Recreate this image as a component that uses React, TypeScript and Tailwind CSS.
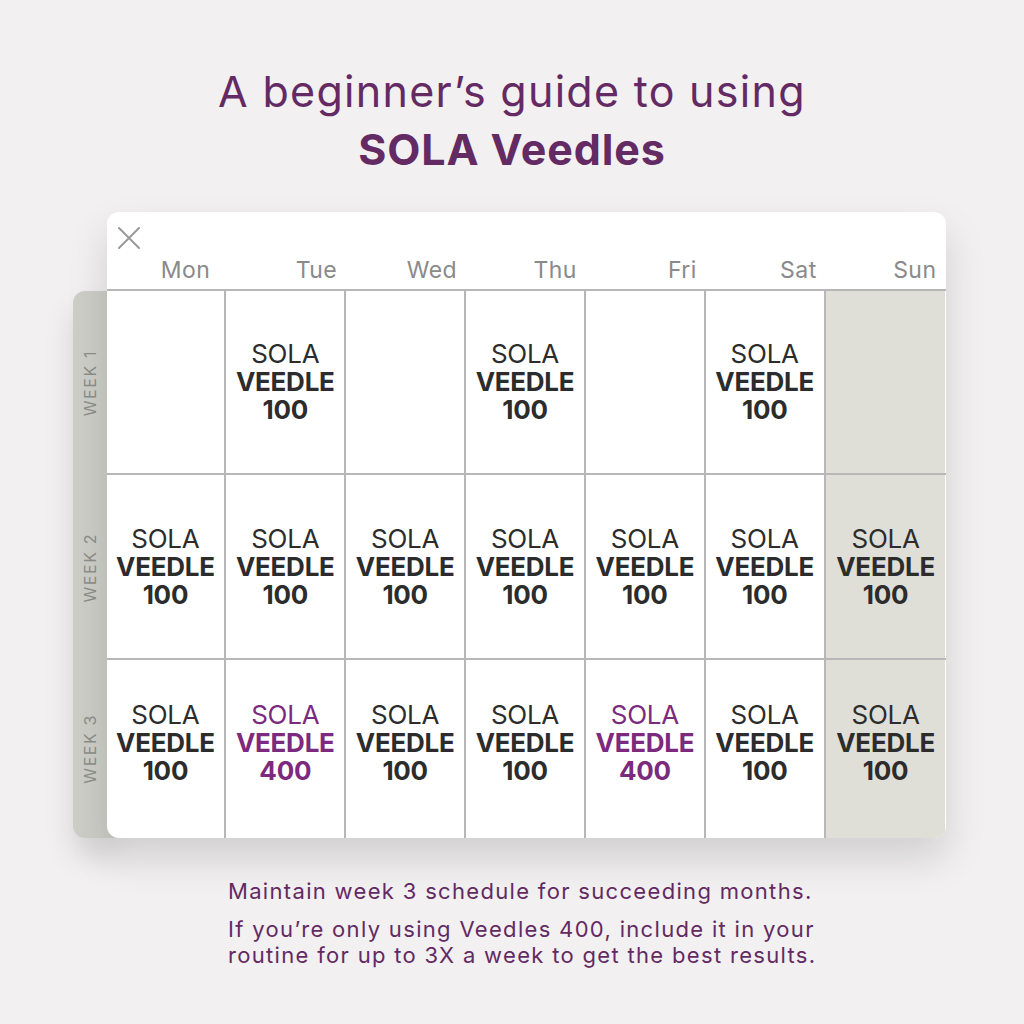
import React from "react";

const days = ["Mon", "Tue", "Wed", "Thu", "Fri", "Sat", "Sun"];

// null = empty cell, otherwise the veedle size
const weeks: (number | null)[][] = [
  [null, 100, null, 100, null, 100, null],
  [100, 100, 100, 100, 100, 100, 100],
  [100, 400, 100, 100, 400, 100, 100],
];

const rowHeights = ["h-[184px]", "h-[185px]", "h-[178px]"];

function Cell({ value }: { value: number | null }) {
  if (value === null) return null;
  const color = value === 400 ? "text-[#7b2a7d]" : "text-[#2c2c2c]";
  return (
    <div className={`flex flex-col items-center text-[26px] leading-[28px] tracking-[-0.01em] ${color}`}>
      <span className="font-normal">SOLA</span>
      <span className="font-bold">VEEDLE</span>
      <span className="font-bold">{value}</span>
    </div>
  );
}

export default function App() {
  return (
    <div
      className="flex flex-col items-center w-full min-h-[1024px] bg-[#f2f0f1] text-[#632a63]"
      style={{ fontFamily: "Inter, 'Open Sans', sans-serif" }}
    >
      <h1 className="mt-[62px] text-center text-[43px] leading-[58px] font-normal tracking-[0.03em]">
        A beginner’s guide to using
        <br />
        <span className="font-bold tracking-[0.02em]">SOLA Veedles</span>
      </h1>

      <div className="flex mt-[34px] ml-[-6px]">
        <div className="flex flex-col w-[46px] mt-[79px] -mr-[12px] rounded-l-[12px] bg-[#cdcec8] shadow-[0_18px_30px_rgba(0,0,0,0.12)]">
          {weeks.map((_, i) => (
            <div key={i} className={`flex items-center justify-center w-[34px] ${rowHeights[i]}`}>
              <span className="block w-[18px] text-[16px] leading-[18px] tracking-[0.1em] text-[#8e8f8a] whitespace-nowrap [writing-mode:vertical-rl] rotate-180">
                WEEK {i + 1}
              </span>
            </div>
          ))}
        </div>

        <div className="relative z-10 w-[839px] rounded-[12px] bg-white overflow-hidden shadow-[0_20px_40px_rgba(0,0,0,0.14)]">
          <div className="relative h-[79px] border-b-2 border-[#b7b7b7]">
            <svg className="absolute left-[11px] top-[15px]" width="22" height="22" viewBox="0 0 22 22">
              <path d="M1 1L21 21M21 1L1 21" stroke="#9a9a9a" strokeWidth="2" strokeLinecap="round" />
            </svg>
            <div className="grid grid-cols-7 h-full">
              {days.map((d, i) => (
                <div
                  key={d}
                  className={`flex items-end justify-end pb-[4px] text-[23px] leading-[30px] tracking-[0.02em] text-[#8a8a8a] ${i === 0 ? "pr-[16px]" : "pr-[9px]"}`}
                >
                  {d}
                </div>
              ))}
            </div>
          </div>

          <div className="flex flex-col">
            {weeks.map((row, r) => (
              <div key={r} className={`grid grid-cols-7 ${rowHeights[r]} ${r < 2 ? "border-b-2 border-[#b7b7b7]" : ""}`}>
                {row.map((v, c) => (
                  <div
                    key={c}
                    className={`flex items-center justify-center ${r === 2 ? "pb-[12px]" : ""} ${c < 6 ? "border-r-2 border-[#b7b7b7]" : ""} ${c === 6 ? "bg-[#dfdfd8]" : ""}`}
                  >
                    <Cell value={v} />
                  </div>
                ))}
              </div>
            ))}
          </div>
        </div>
      </div>

      <div className="w-[620px] mt-[40px] ml-[52px] text-[22px] leading-[26px] tracking-[0.06em] text-[#632a63]">
        <p>Maintain week 3 schedule for succeeding months.</p>
        <p className="mt-[12px]">
          If you’re only using Veedles 400, include it in your
          <br />
          routine for up to 3X a week to get the best results.
        </p>
      </div>
    </div>
  );
}
